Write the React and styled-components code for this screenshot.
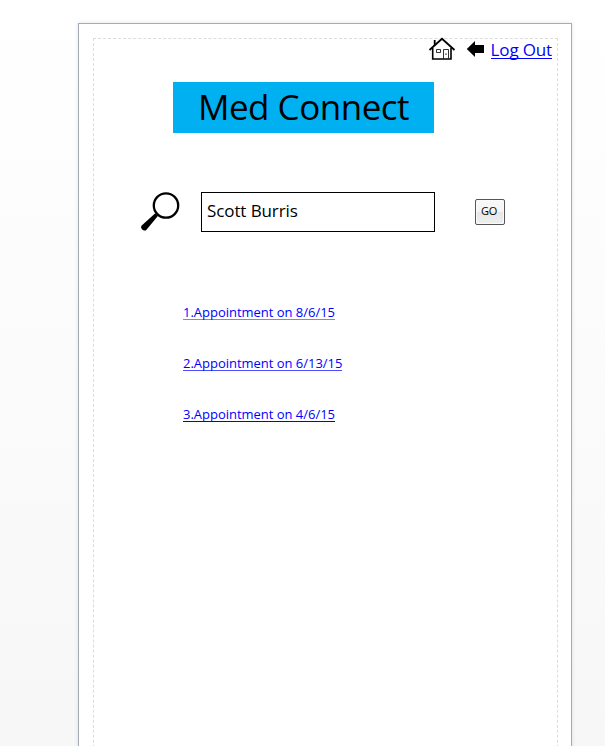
import React from "react";
import styled, { createGlobalStyle } from "styled-components";

const GlobalStyle = createGlobalStyle`
  * { box-sizing: border-box; }
  body { margin: 0; background: #fff; font-family: "Open Sans", "Noto Sans", sans-serif; color: #000; }
`;

const Canvas = styled.div`
  height: 746px;
  padding: 23px 33px 0 78px;
  overflow: hidden;
  background: linear-gradient(#ffffff, #f7f7f7);
`;

const Page = styled.main`
  height: 800px;
  padding: 14px 13px 0 14px;
  background: #fff;
  border: 1px solid #a5acb5;
  box-shadow: 0 0 4px rgba(120, 130, 145, 0.22);
`;

const Margins = styled.div`
  height: 780px;
  border: 1px dashed #dcdcdc;
`;

const TopBar = styled.header`
  display: flex;
  justify-content: flex-end;
  align-items: flex-start;
  height: 43px;
  padding-right: 5px;
`;

const HomeIcon = styled.svg`
  width: 28px;
  height: 24px;
  margin: -3px 10px 0 0;
`;

const ArrowIcon = styled.svg`
  width: 18px;
  height: 18px;
  margin: 1px 7px 0 0;
`;

const Link = styled.a`
  display: block;
  width: max-content;
  color: #0000ff;
  text-decoration: none;
  border-bottom: 1px solid ${(p) => p.$line || "#0000ff"};
  font-size: ${(p) => p.$size}px;
  line-height: ${(p) => p.$height + 2}px;
  height: ${(p) => p.$height}px;
  letter-spacing: ${(p) => p.$tracking}px;
  white-space: nowrap;
`;

const Title = styled.h1`
  width: 261px;
  height: 51px;
  margin: 0 0 0 79px;
  background: #00b0f0;
  font-size: 35px;
  font-weight: 400;
  line-height: 49px;
  letter-spacing: -0.5px;
  text-align: center;
`;

const SearchRow = styled.form`
  display: flex;
  align-items: center;
  height: 40px;
  margin: 59px 0 0 45px;
`;

const SearchIcon = styled.svg`
  width: 42px;
  height: 42px;
  margin-right: 20px;
`;

const SearchInput = styled.input`
  width: 234px;
  height: 40px;
  padding: 0 5px 3px;
  border: 1px solid #000;
  border-radius: 0;
  outline: none;
  background: #fff;
  color: #000;
  font: 17px "Open Sans", "Noto Sans", sans-serif;
  letter-spacing: -0.1px;
`;

const GoButton = styled.button`
  width: 30px;
  height: 26px;
  margin-left: 40px;
  padding: 0 2px 2px 0;
  border: 1px solid #55555a;
  border-radius: 2px;
  background: linear-gradient(#f8f8f8 0%, #f4f4f4 49%, #e7e6e7 50%, #efeff0 100%);
  box-shadow: inset 0 0 0 1px #fafafa;
  color: #000;
  font: 11px/20px "Open Sans", "Noto Sans", sans-serif;
  letter-spacing: -0.2px;
`;

const Appointments = styled.nav`
  display: flex;
  flex-direction: column;
  gap: 33px;
  margin: 70px 0 0 89px;
`;

const appointments = [
  { text: "1.Appointment on 8/6/15", line: "#8080ff" },
  { text: "2.Appointment on 6/13/15", line: "#4d4dff" },
  { text: "3.Appointment on 4/6/15", line: "#0000ff" },
];

export default function App() {
  return (
    <>
      <GlobalStyle />
      <Canvas>
        <Page>
          <Margins>
            <TopBar>
              <HomeIcon viewBox="0 0 28 24" fill="none" stroke="#000">
                <path d="M1.5 14 14 2.8l12.5 11.2" strokeWidth="1.8" />
                <path d="M4.7 12v11h18.3v-11" strokeWidth="1.6" />
                <path d="M6.7 9.5V4" strokeWidth="1.8" />
                <path d="M8.5 13.5h4v3h-4zM15.5 22.5v-9h5v9" strokeWidth="0.8" />
                <path d="M17.4 18.2h1.2" strokeWidth="1.2" />
              </HomeIcon>
              <ArrowIcon viewBox="0 0 18 18">
                <path d="M.8 9 9 1v4h9v8H9v4z" />
              </ArrowIcon>
              <Link href="#" $size={17} $height={20} $tracking={-0.15}>Log Out</Link>
            </TopBar>
            <Title>Med Connect</Title>
            <SearchRow onSubmit={(e) => e.preventDefault()}>
              <SearchIcon viewBox="0 0 42 42">
                <circle cx="27" cy="14.5" r="12.2" fill="none" stroke="#000" strokeWidth="2.3" />
                <path d="m16.3 22.3 2.8 2.5L7.5 38.7c-2.2 2.6-7.2-1.5-4.8-4.2z" />
              </SearchIcon>
              <SearchInput defaultValue="Scott Burris" aria-label="Patient name" />
              <GoButton>GO</GoButton>
            </SearchRow>
            <Appointments>
              {appointments.map((a) => (
                <Link key={a.text} href="#" $size={13} $height={18} $tracking={-0.02} $line={a.line}>
                  {a.text}
                </Link>
              ))}
            </Appointments>
          </Margins>
        </Page>
      </Canvas>
    </>
  );
}
